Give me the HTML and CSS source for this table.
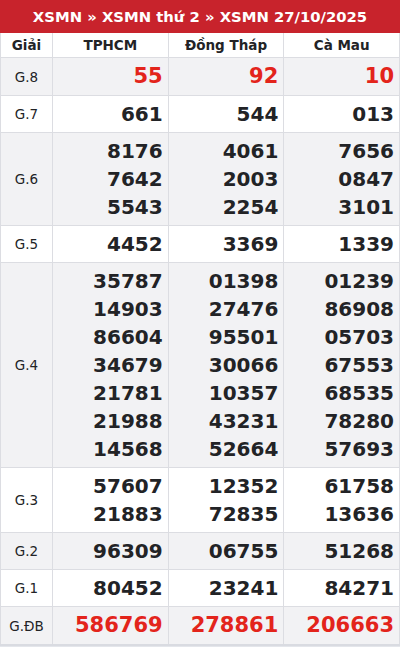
FILE: index.html
```html
<!DOCTYPE html>
<html lang="vi">
<head>
<meta charset="utf-8">
<link rel="stylesheet" href="styles.css">
</head>
<body>
<div class="box">
  <div class="title">XSMN » XSMN thứ 2 » XSMN 27/10/2025</div>
  <table class="kq">
    <colgroup><col class="c-giai"><col class="c-prov"><col class="c-prov"><col class="c-prov"></colgroup>
    <thead>
      <tr><th>Giải</th><th>TPHCM</th><th>Đồng Tháp</th><th>Cà Mau</th></tr>
    </thead>
    <tbody>
      <tr class="alt big"><td class="g">G.8</td><td class="n red">55</td><td class="n red">92</td><td class="n red">10</td></tr>
      <tr><td class="g">G.7</td><td class="n">661</td><td class="n">544</td><td class="n">013</td></tr>
      <tr class="alt"><td class="g">G.6</td><td class="n"><div>8176</div><div>7642</div><div>5543</div></td><td class="n"><div>4061</div><div>2003</div><div>2254</div></td><td class="n"><div>7656</div><div>0847</div><div>3101</div></td></tr>
      <tr><td class="g">G.5</td><td class="n">4452</td><td class="n">3369</td><td class="n">1339</td></tr>
      <tr class="alt"><td class="g">G.4</td>
        <td class="n"><div>35787</div><div>14903</div><div>86604</div><div>34679</div><div>21781</div><div>21988</div><div>14568</div></td>
        <td class="n"><div>01398</div><div>27476</div><div>95501</div><div>30066</div><div>10357</div><div>43231</div><div>52664</div></td>
        <td class="n"><div>01239</div><div>86908</div><div>05703</div><div>67553</div><div>68535</div><div>78280</div><div>57693</div></td>
      </tr>
      <tr><td class="g">G.3</td><td class="n"><div>57607</div><div>21883</div></td><td class="n"><div>12352</div><div>72835</div></td><td class="n"><div>61758</div><div>13636</div></td></tr>
      <tr class="alt"><td class="g">G.2</td><td class="n">96309</td><td class="n">06755</td><td class="n">51268</td></tr>
      <tr><td class="g">G.1</td><td class="n">80452</td><td class="n">23241</td><td class="n">84271</td></tr>
      <tr class="alt big"><td class="g">G.ĐB</td><td class="n red">586769</td><td class="n red">278861</td><td class="n red">206663</td></tr>
    </tbody>
  </table>
</div>
</body>
</html>
```

FILE: styles.css
```css
html, body {
  margin: 0;
  padding: 0;
  background: #e4e6eb;
}
body {
  font-family: "DejaVu Sans", "Noto Sans", sans-serif;
  color: #222326;
  width: 400px;
}
.box {
  background: #fff;
  width: 400px;
}
.title {
  background: #c8232c;
  color: #fff;
  font-weight: bold;
  font-size: 14.8px;
  height: 33px;
  line-height: 33px;
  text-align: center;
}
.kq {
  width: 400px;
  border-collapse: collapse;
  table-layout: fixed;
  border-left: 1px solid #d9dbe1;
}
.c-giai { width: 52px; }
.kq th {
  font-size: 13.5px;
  font-weight: bold;
  height: 24px;
  padding: 0;
  line-height: 24px;
  text-align: center;
  border: 1px solid #dcdde2;
  border-top: none;
  background: #fff;
  color: #222326;
}
.kq td {
  border: 1px solid #dcdde2;
  padding: 4px 5px 4px 0;
  vertical-align: middle;
}
.kq tr:last-child td { border-bottom: 2px solid #d9dbe1; }
.kq tr.alt td { background: #f2f2f4; }
.kq td.g {
  font-size: 13.5px;
  text-align: center;
  padding: 0;
  color: #222326;
}
.kq td.n {
  font-size: 20px;
  font-weight: bold;
  line-height: 28px;
  text-align: right;
  color: #222326;
}
.kq td.n.red {
  color: #e3241b;
  font-size: 21px;
  line-height: 29px;
}
```
